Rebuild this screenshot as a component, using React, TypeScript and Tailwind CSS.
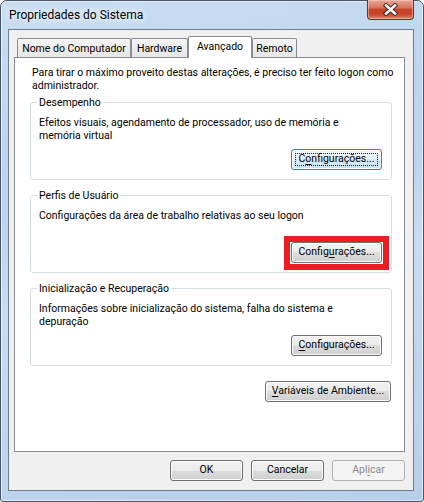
import React from 'react';

type Variant = 'normal' | 'focused' | 'disabled';

interface WinButtonProps {
  label: string;
  mnemonic?: number;
  className?: string;
  variant?: Variant;
}

const buttonStyles: Record<Variant, string> = {
  normal:
    'border-[#707070] text-black bg-[linear-gradient(#f2f2f2_0%,#ebebeb_50%,#dddddd_50%,#cfcfcf_100%)] shadow-[inset_0_0_0_1px_#fbfbfb]',
  focused:
    'border-[#3c7fb1] text-black bg-[linear-gradient(#f3f9fd_0%,#e6f2fa_50%,#d6ebf7_50%,#c8e3f4_100%)] shadow-[inset_0_0_0_1px_#fbfdff]',
  disabled: 'border-[#adb2b5] text-[#8b8b8b] bg-[#f4f4f4]',
};

function Label({ text, mnemonic }: { text: string; mnemonic?: number }) {
  if (mnemonic === undefined) return <>{text}</>;
  return (
    <>
      {text.slice(0, mnemonic)}
      <span className="underline underline-offset-[2px] decoration-1">{text[mnemonic]}</span>
      {text.slice(mnemonic + 1)}
    </>
  );
}

function WinButton({ label, mnemonic, className = '', variant = 'normal' }: WinButtonProps) {
  return (
    <button
      type="button"
      className={`relative flex h-[21px] items-center justify-center rounded-[3px] border text-[10.5px] leading-none ${buttonStyles[variant]} ${className}`}
    >
      {variant === 'focused' && (
        <span className="absolute inset-[3px] border border-dotted border-[#222]" />
      )}
      <span className="relative">
        <Label text={label} mnemonic={mnemonic} />
      </span>
    </button>
  );
}

interface GroupProps {
  title: string;
  lines: string[];
  children: React.ReactNode;
  className?: string;
}

function Group({ title, lines, children, className = '' }: GroupProps) {
  return (
    <fieldset className={`h-[84px] rounded-[3px] border border-[#d5dfe5] px-[6px] pb-[9px] ${className}`}>
      <legend className="px-[2px] text-[10.5px] leading-[13px]">{title}</legend>
      <div className="flex h-[61px] flex-col">
        <p className="mt-[7px] pl-[2px] text-[10.5px] leading-[13px]">
          {lines.map((l, i) => (
            <span key={i} className="block whitespace-nowrap">
              {l}
            </span>
          ))}
        </p>
        <div className="mt-auto flex justify-end pr-[3px]">{children}</div>
      </div>
    </fieldset>
  );
}

const tabs = [
  { name: 'Nome do Computador', w: 'w-[114px]' },
  { name: 'Hardware', w: 'w-[57px]' },
  { name: 'Avançado', w: 'w-[64px]', active: true },
  { name: 'Remoto', w: 'w-[45px]' },
];

export default function App() {
  return (
    <div className="h-[502px] w-[424px] bg-white font-['Roboto',sans-serif] text-black">
      <div className="relative flex h-[502px] w-[424px] flex-col rounded-t-[7px] rounded-b-[3px] border border-[#46556a] bg-[linear-gradient(170deg,#c9ddf2_0%,#bcd3ec_35%,#c8dcf1_55%,#b8cfe9_100%)] pb-[10px] pl-[7px] pr-[9px] shadow-[inset_0_0_0_1px_rgba(255,255,255,0.55)]">
        {/* title bar */}
        <div className="flex h-[28px] items-center pl-[1px]">
          <span className="text-[12px] leading-none [text-shadow:0_0_6px_#fff,0_0_10px_#fff]">
            Propriedades do Sistema
          </span>
        </div>
        <div className="absolute right-[9px] top-[-1px] flex h-[20px] w-[47px] items-center justify-center rounded-b-[4px] border border-t-0 border-[#7a2a20] bg-[linear-gradient(#eaa996_0%,#d9755f_40%,#c7432a_50%,#c9432b_75%,#e08a73_100%)] shadow-[inset_0_0_0_1px_rgba(255,220,210,0.45)]">
          <svg width="15" height="13" viewBox="0 0 15 13">
            <path d="M3 2.5 L12 10.5 M12 2.5 L3 10.5" stroke="#4a3430" strokeWidth="4.6" strokeLinecap="square" />
            <path d="M3 2.5 L12 10.5 M12 2.5 L3 10.5" stroke="#ffffff" strokeWidth="2.4" strokeLinecap="square" />
          </svg>
        </div>

        {/* client area */}
        <div className="flex h-[462px] w-[406px] flex-col border border-[#6d7c8e] bg-[#f0f0f0] pl-[5px] pr-[8px] pt-[6px]">
          <div className="relative z-10 flex h-[21px] items-end pl-[3px]">
            {tabs.map((t) =>
              t.active ? (
                <div
                  key={t.name}
                  className={`-mb-px flex h-[22px] ${t.w} items-start justify-center rounded-t-[2px] border border-b-0 border-[#898c95] bg-white pt-[3px] text-[10.5px] leading-[13px]`}
                >
                  {t.name}
                </div>
              ) : (
                <div
                  key={t.name}
                  className={`flex h-[19px] ${t.w} items-center justify-center rounded-t-[2px] border border-b-0 border-[#898c95] bg-[linear-gradient(#f4f4f4,#e6e6e6)] text-[10.5px] leading-[13px]`}
                >
                  {t.name}
                </div>
              ),
            )}
          </div>

          <div className="flex h-[395px] w-[391px] flex-col border border-[#898c95] bg-white pl-[15px] pr-[12px] pt-[8px]">
            <p className="pl-[2px] text-[10.5px] leading-[13px]">
              <span className="block whitespace-nowrap">
                Para tirar o máximo proveito destas alterações, é preciso ter feito logon como
              </span>
              <span className="block">administrador.</span>
            </p>

            <Group
              className="mt-[4px]"
              title="Desempenho"
              lines={['Efeitos visuais, agendamento de processador, uso de memória e', 'memória virtual']}
            >
              <WinButton label="Configurações..." mnemonic={1} variant="focused" className="w-[91px]" />
            </Group>

            <Group
              className="mt-[9px]"
              title="Perfis de Usuário"
              lines={['Configurações da área de trabalho relativas ao seu logon']}
            >
              <div className="relative">
                <WinButton label="Configurações..." mnemonic={6} className="w-[91px]" />
                <span className="absolute -bottom-[7px] -left-[7px] -right-[7px] -top-[6px] border-[6px] border-[#ed1c24]" />
              </div>
            </Group>

            <Group
              className="mt-[9px]"
              title="Inicialização e Recuperação"
              lines={['Informações sobre inicialização do sistema, falha do sistema e', 'depuração']}
            >
              <WinButton label="Configurações..." mnemonic={0} className="w-[91px]" />
            </Group>

            <div className="mt-[15px] flex justify-end pr-[1px]">
              <WinButton label="Variáveis de Ambiente..." mnemonic={0} className="w-[126px]" />
            </div>
          </div>

          <div className="mt-[8px] flex justify-end gap-[8px]">
            <WinButton label="OK" className="w-[73px]" />
            <WinButton label="Cancelar" className="w-[73px]" />
            <WinButton label="Aplicar" mnemonic={3} variant="disabled" className="w-[73px]" />
          </div>
        </div>
      </div>
    </div>
  );
}
